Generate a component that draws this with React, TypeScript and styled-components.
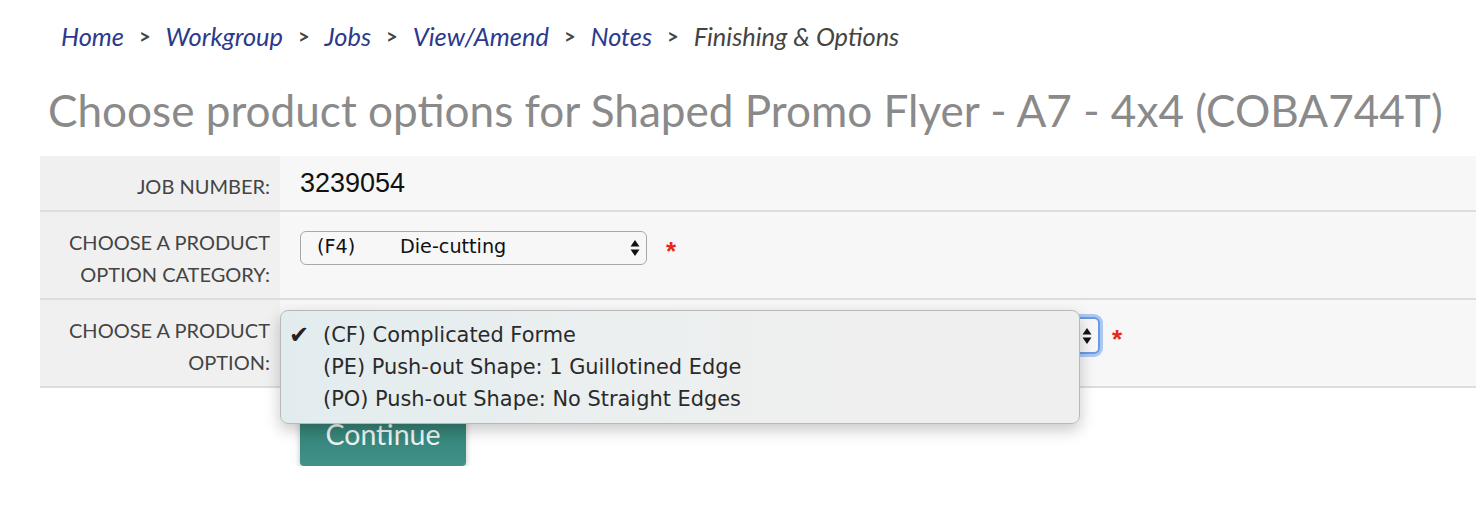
import React from "react";
import styled, { createGlobalStyle } from "styled-components";

const GlobalStyle = createGlobalStyle`
  html, body {
    margin: 0;
    padding: 0;
    background: #ffffff;
    overflow: hidden;
  }
  body {
    font-family: "Lato", "Liberation Sans", sans-serif;
  }
`;

const crumbs = ["Home", "Workgroup", "Jobs", "View/Amend", "Notes"];

const options = [
  "(CF) Complicated Forme",
  "(PE) Push-out Shape: 1 Guillotined Edge",
  "(PO) Push-out Shape: No Straight Edges",
];

const App = () => {
  return (
    <Page>
      <GlobalStyle />
      <Breadcrumb>
        {crumbs.map((c) => (
          <React.Fragment key={c}>
            <CrumbLink href="#">{c}</CrumbLink>
            <Sep>&gt;</Sep>
          </React.Fragment>
        ))}
        <Current>Finishing &amp; Options</Current>
      </Breadcrumb>

      <Title>Choose product options for Shaped Promo Flyer - A7 - 4x4 (COBA744T)</Title>

      <Table>
        <Row>
          <Label>Job number:</Label>
          <Value>
            <JobNumber>3239054</JobNumber>
          </Value>
        </Row>
        <Row>
          <Label>
            Choose a product
            <br />
            option category:
          </Label>
          <Value>
            <SelectLine>
              <FakeSelect $width={347}>
                <SelectText>
                  <Code>(F4)</Code>Die-cutting
                </SelectText>
                <Arrows />
              </FakeSelect>
              <Required $gap={19}>*</Required>
            </SelectLine>
          </Value>
        </Row>
        <Row>
          <Label>
            Choose a product
            <br />
            option:
          </Label>
          <Value>
            <SelectLine>
              <FakeSelect $width={800} $focused>
                <SelectText />
                <Arrows />
              </FakeSelect>
              <Required $gap={12}>*</Required>
              <Menu>
                {options.map((o, i) => (
                  <MenuItem key={o}>
                    <Check>{i === 0 ? "✔" : ""}</Check>
                    {o}
                  </MenuItem>
                ))}
              </Menu>
            </SelectLine>
          </Value>
        </Row>
      </Table>

      <Actions>
        <ContinueButton>Continue</ContinueButton>
      </Actions>
    </Page>
  );
};

const Arrows = () => (
  <ArrowBox>
    <svg width="10" height="18" viewBox="0 0 10 18">
      <path d="M5 1 L9.5 7.5 H0.5 Z" fill="#111" />
      <path d="M5 17 L9.5 10.5 H0.5 Z" fill="#111" />
    </svg>
  </ArrowBox>
);

const Page = styled.div`
  padding-top: 20px;
`;

const Breadcrumb = styled.nav`
  display: flex;
  align-items: center;
  padding-left: 61px;
  font-family: "Lato", sans-serif;
  font-style: italic;
  font-size: 25.4px;
  height: 32px;
`;

const CrumbLink = styled.a`
  color: #2b3a8c;
  text-decoration: none;
`;

const Sep = styled.span`
  font-style: normal;
  font-size: 20px;
  font-weight: 700;
  color: #444;
  margin: 0 15px;
`;

const Current = styled.span`
  color: #444;
`;

const Title = styled.h1`
  margin: 32px 0 0 48px;
  font-family: "Lato", sans-serif;
  font-weight: 400;
  font-size: 44.1px;
  line-height: 52px;
  color: #8a8a8a;
  white-space: nowrap;
`;

const Table = styled.div`
  margin: 20px 0 0 40px;
  display: flex;
  flex-direction: column;
`;

const Row = styled.div`
  display: grid;
  grid-template-columns: 240px 1fr;
  border-bottom: 2px solid #dddddd;
`;

const Label = styled.div`
  background: #f0f0f0;
  text-align: right;
  text-transform: uppercase;
  font-family: "Lato", sans-serif;
  font-size: 20px;
  line-height: 32px;
  color: #444444;
  padding: 14px 10px 8px 10px;
`;

const Value = styled.div`
  background: #f7f7f7;
  padding: 11px 20px 10px 20px;
`;

const JobNumber = styled.div`
  font-family: "Liberation Sans", Arial, sans-serif;
  font-size: 27px;
  line-height: 32px;
  color: #111;
`;

const SelectLine = styled.div`
  position: relative;
  display: flex;
  align-items: center;
  margin-top: 5px;
`;

const FakeSelect = styled.div<{ $width: number; $focused?: boolean }>`
  box-sizing: border-box;
  width: ${(p) => p.$width}px;
  height: ${(p) => (p.$focused ? 37 : 34)}px;
  display: flex;
  align-items: center;
  justify-content: space-between;
  padding: 0 6px 0 16px;
  background: #f7f7f7;
  border: ${(p) => (p.$focused ? "2px solid #6a9be0" : "1.5px solid #a8a8a8")};
  border-radius: 6px;
  box-shadow: ${(p) => (p.$focused ? "0 0 0 3px #a9c8f3" : "none")};
`;

const SelectText = styled.span`
  display: flex;
  align-items: center;
  margin-top: -2px;
  font-family: "DejaVu Sans", "Liberation Sans", sans-serif;
  font-size: 19.2px;
  color: #111;
  white-space: pre;
`;

const Code = styled.span`
  display: inline-block;
  width: 83px;
`;

const ArrowBox = styled.span`
  display: flex;
  align-items: center;
`;

const Required = styled.span<{ $gap: number }>`
  color: #e8281e;
  font-family: "Liberation Sans", Arial, sans-serif;
  font-size: 26px;
  font-weight: 700;
  margin: 8px 0 0 ${(p) => p.$gap}px;
`;

const Menu = styled.div`
  position: absolute;
  left: -20px;
  top: -6px;
  width: 800px;
  box-sizing: border-box;
  padding: 8px 0 8px 0;
  background: linear-gradient(90deg, #e2ecee 0%, #ebeff0 40%, #efefef 70%);
  border: 1px solid #b8b8b8;
  border-radius: 8px;
  box-shadow: 0 6px 16px rgba(0, 0, 0, 0.22);
  z-index: 2;
`;

const MenuItem = styled.div`
  display: flex;
  align-items: center;
  height: 32px;
  font-family: "DejaVu Sans", "Liberation Sans", sans-serif;
  font-size: 20.9px;
  color: #2a2a2a;
  white-space: nowrap;
`;

const Check = styled.span`
  display: inline-block;
  width: 42px;
  padding-left: 8px;
  box-sizing: border-box;
  font-size: 24px;
  color: #222;
`;

const Actions = styled.div`
  padding: 14px 0 0 300px;
`;

const ContinueButton = styled.button`
  width: 166px;
  height: 64px;
  border: none;
  border-radius: 4px;
  background: linear-gradient(180deg, #2f7b6d 0%, #40918a 100%);
  box-shadow: 0 3px 6px rgba(0, 0, 0, 0.25);
  color: #eef4f2;
  font-family: "Lato", sans-serif;
  font-size: 28.5px;
  cursor: pointer;
`;

export default App;
